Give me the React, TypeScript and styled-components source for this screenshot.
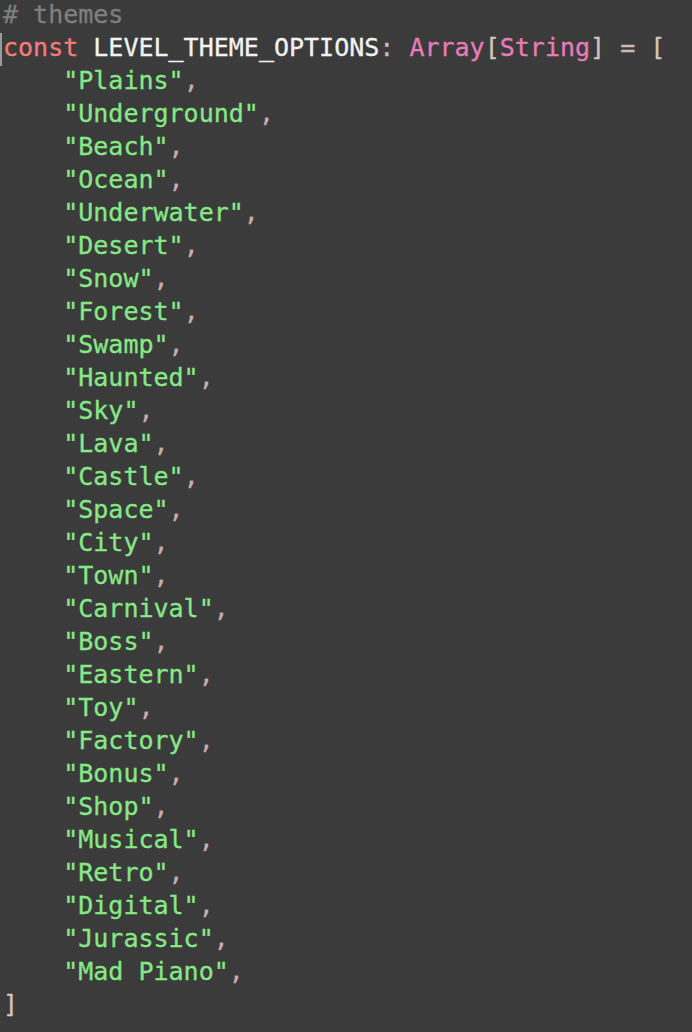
import React from "react";
import styled, { createGlobalStyle } from "styled-components";

const Global = createGlobalStyle`
  html, body { margin: 0; padding: 0; background: #3b3b3b; }
  body { overflow: hidden; }
`;

const C = {
  comment: "#7f7f7f",
  keyword: "#f67a7a",
  ident: "#f2f2f2",
  punct: "#c9b9b4",
  type: "#e77cb9",
  bracket: "#d6c3bb",
  str: "#86e886",
  comma: "#c6aeab",
};

const Editor = styled.div`
  background: #3b3b3b;
  width: 692px;
  height: 1032px;
  overflow: hidden;
  font-family: "DejaVu Sans Mono", "Liberation Mono", monospace;
  font-size: 25px;
  white-space: pre;
`;

const Code = styled.div`
  display: flex;
  flex-direction: column;
`;

const Line = styled.div<{ $mark?: boolean }>`
  height: 33px;
  line-height: 29px;
  box-sizing: border-box;
  padding-left: 1px;
  border-left: 2px solid ${(p) => (p.$mark ? "#9a9a9a" : "transparent")};
  -webkit-text-stroke: 0.3px currentColor;
`;

const Tok = styled.span<{ $c: string }>`
  color: ${(p) => p.$c};
`;

const themes = [
  "Plains",
  "Underground",
  "Beach",
  "Ocean",
  "Underwater",
  "Desert",
  "Snow",
  "Forest",
  "Swamp",
  "Haunted",
  "Sky",
  "Lava",
  "Castle",
  "Space",
  "City",
  "Town",
  "Carnival",
  "Boss",
  "Eastern",
  "Toy",
  "Factory",
  "Bonus",
  "Shop",
  "Musical",
  "Retro",
  "Digital",
  "Jurassic",
  "Mad Piano",
];

export default function App() {
  return (
    <>
      <Global />
      <Editor>
        <Code>
          <Line>
            <Tok $c={C.comment}># themes</Tok>
          </Line>
          <Line $mark>
            <Tok $c={C.keyword}>const</Tok>
            <Tok $c={C.ident}> LEVEL_THEME_OPTIONS</Tok>
            <Tok $c={C.punct}>: </Tok>
            <Tok $c={C.type}>Array</Tok>
            <Tok $c={C.bracket}>[</Tok>
            <Tok $c={C.type}>String</Tok>
            <Tok $c={C.bracket}>]</Tok>
            <Tok $c={C.punct}> = </Tok>
            <Tok $c={C.bracket}>[</Tok>
          </Line>
          {themes.map((t) => (
            <Line key={t}>
              <Tok $c={C.str}>{`    "${t}"`}</Tok>
              <Tok $c={C.comma}>,</Tok>
            </Line>
          ))}
          <Line>
            <Tok $c={C.bracket}>]</Tok>
          </Line>
        </Code>
      </Editor>
    </>
  );
}
